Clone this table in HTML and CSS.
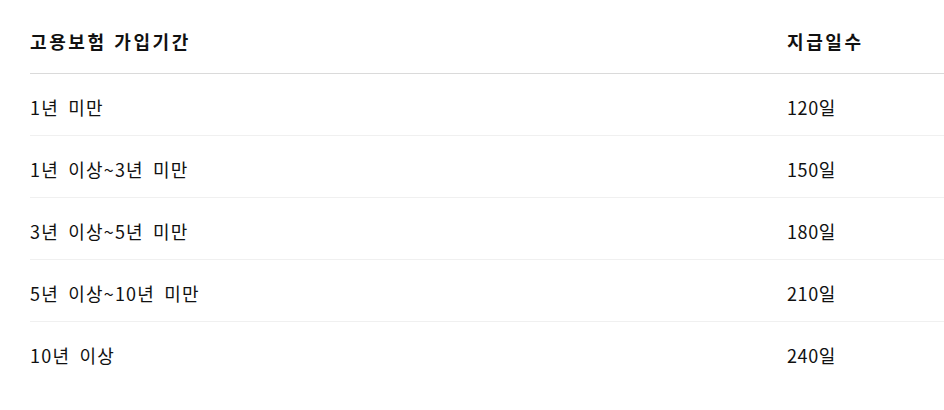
FILE: index.html
```html
<!DOCTYPE html>
<html lang="ko">
<head>
<meta charset="utf-8">
<link rel="stylesheet" href="styles.css">
</head>
<body>
<table class="benefit-table">
  <thead>
    <tr><th class="col-period">고용보험 가입기간</th><th class="col-days">지급일수</th></tr>
  </thead>
  <tbody>
    <tr><td class="period">1년 미만</td><td>120일</td></tr>
    <tr><td class="period">1년 이상~3년 미만</td><td>150일</td></tr>
    <tr><td class="period">3년 이상~5년 미만</td><td>180일</td></tr>
    <tr><td class="period">5년 이상~10년 미만</td><td>210일</td></tr>
    <tr><td class="period">10년 이상</td><td>240일</td></tr>
  </tbody>
</table>
</body>
</html>
```
FILE: styles.css
```css
html, body {
  margin: 0;
  padding: 0;
  background: #fff;
}
body {
  font-family: "Noto Sans CJK KR", "Noto Sans", sans-serif;
  color: #111;
  padding-left: 30px;
}
.benefit-table {
  border-collapse: collapse;
  width: 914px;
  font-size: 18px;
  line-height: 26px;
}
.benefit-table th {
  text-align: left;
  font-weight: 700;
  letter-spacing: 2.6px;
  padding: 28px 0 19px;
  border-bottom: 1px solid #dadada;
}
.col-period {
  width: 757px;
}
.benefit-table td {
  letter-spacing: 0.6px;
  padding: 20px 0 15px;
  border-bottom: 1px solid #f0f0f0;
}
.benefit-table td.period {
  letter-spacing: 1.2px;
  word-spacing: 3px;
}
.benefit-table tbody tr:last-child td {
  border-bottom: none;
}
```
